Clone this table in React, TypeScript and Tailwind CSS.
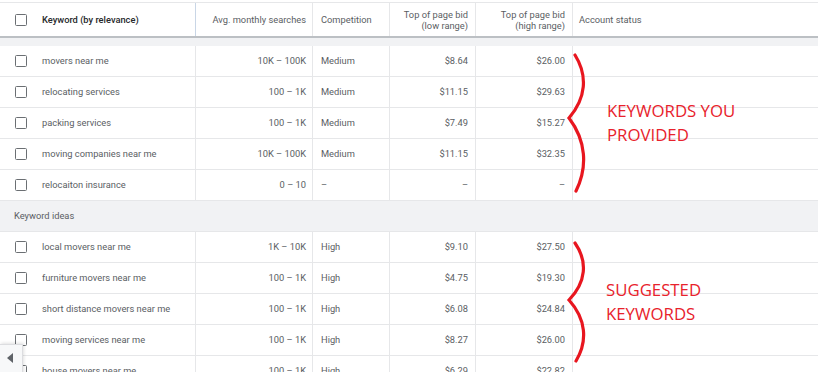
import React from "react";

type Row = { kw: string; avg: string; comp: string; low: string; high: string };

const provided: Row[] = [
  { kw: "movers near me", avg: "10K – 100K", comp: "Medium", low: "$8.64", high: "$26.00" },
  { kw: "relocating services", avg: "100 – 1K", comp: "Medium", low: "$11.15", high: "$29.63" },
  { kw: "packing services", avg: "100 – 1K", comp: "Medium", low: "$7.49", high: "$15.27" },
  { kw: "moving companies near me", avg: "10K – 100K", comp: "Medium", low: "$11.15", high: "$32.35" },
  { kw: "relocaiton insurance", avg: "0 – 10", comp: "–", low: "–", high: "–" },
];

const ideas: Row[] = [
  { kw: "local movers near me", avg: "1K – 10K", comp: "High", low: "$9.10", high: "$27.50" },
  { kw: "furniture movers near me", avg: "100 – 1K", comp: "High", low: "$4.75", high: "$19.30" },
  { kw: "short distance movers near me", avg: "100 – 1K", comp: "High", low: "$6.08", high: "$24.84" },
  { kw: "moving services near me", avg: "100 – 1K", comp: "High", low: "$8.27", high: "$26.00" },
  { kw: "house movers near me", avg: "100 – 1K", comp: "High", low: "$6.29", high: "$22.82" },
];

const grid = "grid grid-cols-[196px_117px_77px_86px_97px_1fr]";

function Checkbox() {
  return <div className="w-[12px] h-[12px] border-[1.5px] border-[#6b6f73] rounded-[1.5px] bg-white shrink-0" />;
}

function DataRow({ r }: { r: Row }) {
  return (
    <div className={`${grid} h-[31px] border-b border-[#e6e7e9] text-[#5a5e63]`}>
      <div className="flex items-center pl-[15px] border-r border-[#e6e7e9]">
        <Checkbox />
        <span className="ml-[15px]">{r.kw}</span>
      </div>
      <div className="flex items-center justify-end pr-[6px] border-r border-[#e6e7e9]">{r.avg}</div>
      <div className="flex items-center pl-[8px] border-r border-[#e6e7e9]">{r.comp}</div>
      <div className="flex items-center justify-end pr-[7px] border-r border-[#e6e7e9]">{r.low}</div>
      <div className="flex items-center justify-end pr-[7px] border-r border-[#e6e7e9]">{r.high}</div>
      <div />
    </div>
  );
}

function Brace({ top, mid, bottom }: { top: number; mid: number; bottom: number }) {
  const h = bottom - top;
  const m = mid - top;
  const d = `M 9 2 C 22 ${m * 0.35}, 20 ${m * 0.7}, 3 ${m} C 20 ${m + (h - m) * 0.3}, 22 ${m + (h - m) * 0.65}, 10 ${h - 2}`;
  return (
    <svg
      className="absolute"
      style={{ left: 566, top, width: 26, height: h }}
      viewBox={`0 0 26 ${h}`}
    >
      <path d={d} fill="none" stroke="#e8161f" strokeWidth={3.2} strokeLinecap="round" />
    </svg>
  );
}

export default function App() {
  return (
    <div
      className="relative w-[818px] h-[372px] overflow-hidden bg-white text-[9.3px] leading-none"
      style={{ fontFamily: "Roboto, 'Liberation Sans', sans-serif" }}
    >
      <div className="h-[2px]" />
      <div className="border-t border-[#e6e7e9]">
        <div className={`${grid} h-[35px] border-b-2 border-[#bcc0c4] text-[#5a5e63]`}>
          <div className="flex items-center pl-[15px] border-r border-[#c9d6e6]">
            <Checkbox />
            <span className="ml-[15px] font-medium text-[#26282b]">Keyword (by relevance)</span>
          </div>
          <div className="flex items-center justify-end pr-[6px] border-r border-[#e6e7e9]">Avg. monthly searches</div>
          <div className="flex items-center pl-[8px] border-r border-[#e6e7e9]">Competition</div>
          <div className="flex flex-col items-end justify-center pr-[7px] border-r border-[#e6e7e9] leading-[11px] text-right">
            <span>Top of page bid</span>
            <span>(low range)</span>
          </div>
          <div className="flex flex-col items-end justify-center pr-[7px] border-r border-[#e6e7e9] leading-[11px] text-right">
            <span>Top of page bid</span>
            <span>(high range)</span>
          </div>
          <div className="flex items-center pl-[6px]">Account status</div>
        </div>
        <div className="h-[8px] bg-[#f1f2f4]" />
      </div>
      {provided.map((r) => (
        <DataRow key={r.kw} r={r} />
      ))}
      <div className="h-[31px] bg-[#f1f2f4] border-b border-[#e6e7e9] flex items-center pl-[14px] text-[#5a5e63]">
        Keyword ideas
      </div>
      {ideas.map((r) => (
        <DataRow key={r.kw} r={r} />
      ))}

      <Brace top={53} mid={118} bottom={193} />
      <Brace top={241} mid={300} bottom={363} />

      <div
        className="absolute left-[607px] top-[99px] text-[#e8222c] text-[16.8px] leading-[24px]"
        style={{ fontFamily: "'Open Sans', sans-serif" }}
      >
        <div>KEYWORDS YOU</div>
        <div>PROVIDED</div>
      </div>
      <div
        className="absolute left-[606px] top-[278px] text-[#e8222c] text-[16.8px] leading-[24px]"
        style={{ fontFamily: "'Open Sans', sans-serif" }}
      >
        <div>SUGGESTED</div>
        <div>KEYWORDS</div>
      </div>

      <div className="absolute left-0 top-[344px] w-[23px] h-[32px] bg-[#f7f8f9] border-t border-r border-[#dcdde0] shadow-[1px_-1px_3px_rgba(0,0,0,0.12)] flex items-start justify-center pt-[8px]">
        <div className="w-0 h-0 border-y-[5px] border-y-transparent border-r-[6px] border-r-[#5f6368] mr-[2px]" />
      </div>
    </div>
  );
}
